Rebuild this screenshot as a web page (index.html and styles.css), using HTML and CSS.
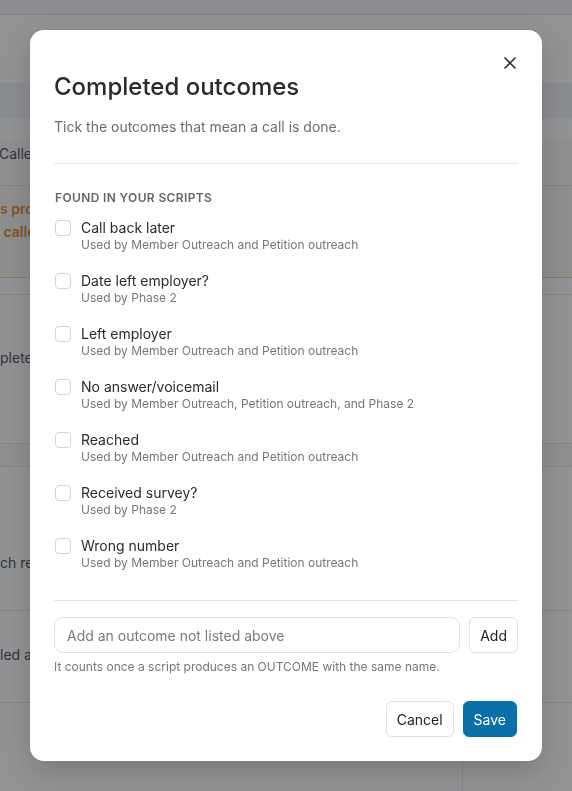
FILE: index.html
```html
<!DOCTYPE html>
<html lang="en">
<head>
<meta charset="utf-8">
<title>Completed outcomes</title>
<link rel="stylesheet" href="styles.css">
</head>
<body>
<div class="page">
  <div class="topbar"></div>
  <div class="header"></div>
  <div class="band"></div>
  <div class="spacer"></div>
  <div class="tabs"><span class="tab">Calle</span></div>
  <div class="notice">
    <span class="notice-line">s proj</span>
    <span class="notice-line"> calle</span>
  </div>
  <div class="gap"></div>
  <div class="row row-a"><span class="row-text">plete a</span></div>
  <div class="row-band"></div>
  <div class="row row-b"><span class="row-text">ch res</span></div>
  <div class="row row-c"><span class="row-text">led ag</span></div>
  <div class="row-split">
    <div class="split-main"></div>
    <div class="split-side"></div>
  </div>
</div>

<div class="overlay">
  <div class="modal" role="dialog" aria-labelledby="modal-title">
    <button class="close" aria-label="Close">
      <svg viewBox="0 0 24 24" width="20" height="20" aria-hidden="true">
        <path d="M6 6L18 18M18 6L6 18" fill="none" stroke="#2b2b2b" stroke-width="2" stroke-linecap="round"/>
      </svg>
    </button>
    <div class="modal-head">
      <h2 class="title" id="modal-title">Completed outcomes</h2>
      <p class="subtitle">Tick the outcomes that mean a call is done.</p>
    </div>

    <div class="section">
      <div class="section-title">FOUND IN YOUR SCRIPTS</div>
      <ul class="list">
        <li class="item"><input type="checkbox" class="check"><div class="item-text"><div class="item-label">Call back later</div><div class="item-sub">Used by Member Outreach and Petition outreach</div></div></li>
        <li class="item"><input type="checkbox" class="check"><div class="item-text"><div class="item-label">Date left employer?</div><div class="item-sub">Used by Phase 2</div></div></li>
        <li class="item"><input type="checkbox" class="check"><div class="item-text"><div class="item-label">Left employer</div><div class="item-sub">Used by Member Outreach and Petition outreach</div></div></li>
        <li class="item"><input type="checkbox" class="check"><div class="item-text"><div class="item-label">No answer/voicemail</div><div class="item-sub">Used by Member Outreach, Petition outreach, and Phase 2</div></div></li>
        <li class="item"><input type="checkbox" class="check"><div class="item-text"><div class="item-label">Reached</div><div class="item-sub">Used by Member Outreach and Petition outreach</div></div></li>
        <li class="item"><input type="checkbox" class="check"><div class="item-text"><div class="item-label">Received survey?</div><div class="item-sub">Used by Phase 2</div></div></li>
        <li class="item"><input type="checkbox" class="check"><div class="item-text"><div class="item-label">Wrong number</div><div class="item-sub">Used by Member Outreach and Petition outreach</div></div></li>
      </ul>
    </div>

    <div class="add">
      <div class="add-row">
        <input type="text" class="add-input" placeholder="Add an outcome not listed above">
        <button class="btn">Add</button>
      </div>
      <p class="help">It counts once a script produces an OUTCOME with the same name.</p>
    </div>

    <div class="actions">
      <button class="btn">Cancel</button>
      <button class="btn btn-primary">Save</button>
    </div>
  </div>
</div>
</body>
</html>
```

FILE: styles.css
```css
* { box-sizing: border-box; }

html, body {
  margin: 0;
  padding: 0;
  height: 100%;
  overflow: hidden;
  background: #ffffff;
  font-family: Inter, "Noto Sans", "Liberation Sans", sans-serif;
}

/* ---------- background page ---------- */
.page {
  width: 100%;
  font-size: 14px;
  color: #52525b;
}
.topbar {
  height: 15px;
  background: #f4f4f5;
  border-bottom: 1px solid #dcdce0;
}
.header { height: 68px; }
.band { height: 35px; background: #f3f4f5; }
.spacer { height: 21px; }
.tabs {
  height: 47px;
  padding-top: 5px;
  background: #fafafa;
  border-bottom: 1px solid #e4e4e7;
  line-height: 20px;
}
.tab { display: block; margin-left: -1px; }
.notice {
  height: 92px;
  padding-top: 11px;
  background: #fdf8f3;
  border-bottom: 1px solid #efcfa6;
  color: #e0893a;
  font-weight: 600;
  line-height: 23px;
}
.notice-line { display: block; white-space: pre; }
.gap {
  height: 17px;
  border-bottom: 1px solid #e4e4e7;
}
.row {
  border-bottom: 1px solid #e4e4e7;
  line-height: 20px;
}
.row-text { display: block; }
.row-a { height: 149px; padding-top: 53px; }
.row-band {
  height: 23px;
  background: #fafafa;
  border-bottom: 1px solid #e4e4e7;
}
.row-b { height: 144px; padding-top: 86px; }
.row-c { height: 92px; padding-top: 34px; }
.row-split {
  display: grid;
  grid-template-columns: 463px 1fr;
  height: 120px;
}
.split-main { border-right: 1px solid #e4e4e7; }

/* ---------- overlay + modal ---------- */
.overlay {
  position: fixed;
  inset: 0;
  background: rgba(15, 20, 25, 0.46);
  display: flex;
  align-items: center;
  justify-content: center;
}
.modal {
  position: relative;
  width: 512px;
  background: #ffffff;
  border-radius: 14px;
  padding: 42px 24px 24px;
  box-shadow: 0 10px 30px rgba(0, 0, 0, 0.18);
  color: #2b2b2b;
}
.close {
  position: absolute;
  top: 23px;
  right: 22px;
  width: 20px;
  height: 20px;
  padding: 0;
  border: 0;
  background: transparent;
  display: flex;
  align-items: center;
  justify-content: center;
  cursor: pointer;
}
.modal-head {
  padding-bottom: 26px;
  border-bottom: 1px solid #e6e6e6;
}
.title {
  margin: 0;
  font-size: 24px;
  line-height: 30px;
  font-weight: 500;
  color: #2a2a2a;
}
.subtitle {
  margin: 15px 0 0;
  font-size: 14px;
  line-height: 20px;
  color: #6b6b6b;
}

.section {
  padding-top: 26px;
  padding-bottom: 29px;
  border-bottom: 1px solid #e6e6e6;
}
.section-title {
  font-size: 12px;
  line-height: 16px;
  font-weight: 600;
  letter-spacing: 0.03em;
  color: #666666;
  padding-left: 1px;
}
.list {
  list-style: none;
  margin: 13px 0 0;
  padding: 0;
  display: flex;
  flex-direction: column;
  gap: 19px;
}
.item {
  display: flex;
  align-items: flex-start;
  gap: 10px;
  padding-left: 1px;
}
.check {
  appearance: none;
  -webkit-appearance: none;
  margin: 1px 0 0;
  width: 16px;
  height: 16px;
  flex: none;
  border: 1px solid #d4d4dc;
  border-radius: 4px;
  background: #ffffff;
}
.item-label {
  font-size: 14px;
  line-height: 18px;
  color: #2b2b2b;
}
.item-sub {
  font-size: 12px;
  line-height: 16px;
  color: #777777;
}

.add { padding-top: 16px; }
.add-row {
  display: flex;
  gap: 9px;
}
.add-input {
  flex: 1;
  height: 36px;
  margin: 0;
  padding: 0 12px;
  border: 1px solid #e2e2e2;
  border-radius: 9px;
  font-family: inherit;
  font-size: 14px;
  color: #2b2b2b;
  background: #ffffff;
  outline: none;
}
.add-input::placeholder { color: #7a7a7a; }
.help {
  margin: 6px 0 0;
  font-size: 12px;
  line-height: 16px;
  color: #777777;
}

.btn {
  height: 36px;
  margin: 0;
  padding: 0 10px;
  border: 1px solid #e2e2e2;
  border-radius: 6px;
  background: #ffffff;
  font-family: inherit;
  font-size: 14px;
  font-weight: 400;
  color: #222222;
  box-shadow: 0 1px 2px rgba(0, 0, 0, 0.04);
  cursor: pointer;
}
.btn-primary {
  background: #0b6fa8;
  border-color: #0b6fa8;
  color: #ffffff;
}
.actions {
  margin-top: 26px;
  display: flex;
  justify-content: flex-end;
  gap: 9px;
  padding-right: 1px;
}
```
